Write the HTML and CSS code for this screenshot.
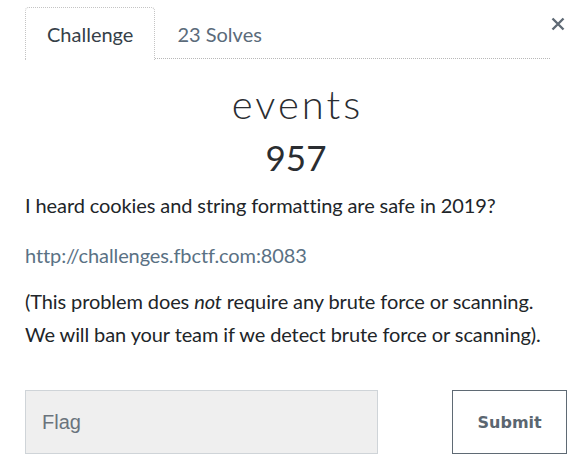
FILE: index.html
```html
<!DOCTYPE html>
<html>
<head>
<meta charset="utf-8">
<link rel="stylesheet" href="styles.css">
</head>
<body>
<div class="modal">
  <div class="tabs-row">
    <ul class="tabs">
      <li class="tab active">Challenge</li>
      <li class="tab">23 Solves</li>
    </ul>
    <button class="close" aria-label="Close">
      <svg width="14" height="14" viewBox="0 0 14 14"><path d="M1.5 1.5 L12.5 12.5 M12.5 1.5 L1.5 12.5" stroke="#5f6a75" stroke-width="2.4" stroke-linecap="butt"/></svg>
    </button>
  </div>
  <h2 class="title">events</h2>
  <h3 class="points">957</h3>
  <div class="desc">
    <p class="intro">I heard cookies and string formatting are safe in 2019?</p>
    <p class="url"><a class="link" href="#">http://challenges.fbctf.com:8083</a></p>
    <p class="warn">(This problem does <em>not</em> require any brute force or scanning.<br>We will ban your team if we detect brute force or scanning).</p>
  </div>
  <div class="submit-row">
    <input class="flag" type="text" placeholder="Flag">
    <button class="submit">Submit</button>
  </div>
</div>
</body>
</html>
```
FILE: styles.css
```css
html, body {
  margin: 0;
  padding: 0;
  background: #fff;
}
.modal {
  width: 583px;
  height: 462px;
  box-sizing: border-box;
  padding: 7px 16px 0 25px;
  font-family: Lato, "Open Sans", sans-serif;
  color: #212529;
}
.tabs-row {
  display: flex;
  align-items: flex-start;
}
.tabs {
  list-style: none;
  margin: 0;
  padding: 0;
  display: flex;
  flex: 1;
  border-bottom: 1px dotted #b8b8b8;
  height: 52px;
  box-sizing: border-box;
}
.tab {
  font-size: 20px;
  color: #5b6b7a;
  padding: 0 21px;
  line-height: 52px;
  height: 52px;
  box-sizing: border-box;
  border: 1px dotted transparent;
  border-bottom: none;
  border-radius: 4px 4px 0 0;
}
.tab.active {
  color: #363f48;
  border-color: #c4c4c4;
  background: #fff;
  margin-bottom: -1px;
  height: 53px;
}
.close {
  border: none;
  background: none;
  padding: 0;
  margin: 10px 2px 0 1px;
  width: 14px;
  height: 14px;
  display: flex;
}
.title {
  margin: 21px 0 0;
  padding-left: 3px;
  text-align: center;
  font-size: 40px;
  font-weight: 300;
  letter-spacing: 3px;
  line-height: 48px;
  color: #2a2d31;
}
.points {
  margin: 8px 0 0;
  text-align: center;
  font-size: 35px;
  font-weight: 400;
  line-height: 42px;
  color: #2a2d31;
}
.desc {
  font-size: 20px;
  line-height: 33px;
  margin-top: 11px;
  letter-spacing: -0.1px;
}
.desc p {
  margin: 0;
}
.desc .intro {
  margin-bottom: 17px;
}
.desc .url {
  margin-bottom: 13px;
}
.link {
  color: #5a7184;
  text-decoration: none;
}
.submit-row {
  display: flex;
  align-items: stretch;
  margin-top: 39px;
}
.flag {
  width: 354px;
  height: 64px;
  box-sizing: border-box;
  border: 1px solid #cfd4d8;
  background: #efefef;
  padding: 0 16px;
  font-family: "Liberation Sans", Arial, sans-serif;
  font-size: 20px;
  color: #555;
  outline: none;
}
.flag::placeholder {
  color: #6a737c;
}
.submit {
  margin-left: 74px;
  width: 115px;
  height: 64px;
  box-sizing: border-box;
  background: #fff;
  border: 1px solid #5f6a74;
  font-family: "DejaVu Sans", sans-serif;
  font-weight: bold;
  font-size: 16px;
  color: #5b6670;
}
```
